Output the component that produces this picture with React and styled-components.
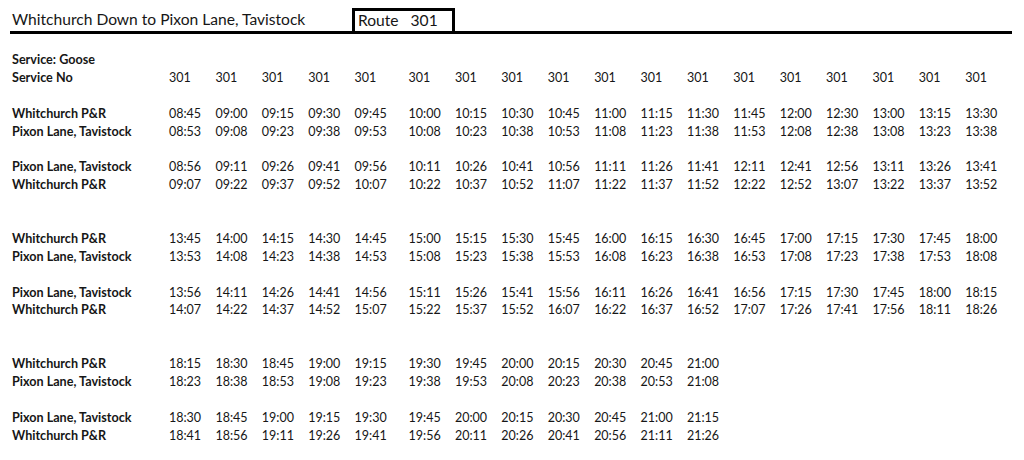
import React from 'react'
import styled, { createGlobalStyle } from 'styled-components'

const GlobalStyle = createGlobalStyle`
  html, body {
    margin: 0;
    padding: 0;
    background: #fff;
  }
  body {
    font-family: Lato, "Liberation Sans", sans-serif;
    color: #161616;
  }
`

const Page = styled.div`
  width: 1024px;
  height: 460px;
  overflow: hidden;
  background: #fff;
`

const Header = styled.div`
  display: flex;
  align-items: flex-end;
  margin: 0 12px 0 10px;
  padding-top: 8px;
  border-bottom: 3px solid #000;
`

const Title = styled.div`
  width: 342px;
  padding-left: 2px;
  box-sizing: border-box;
  font-size: 15.6px;
  line-height: 23px;
`

const RouteBox = styled.div`
  width: 103px;
  height: 23px;
  box-sizing: border-box;
  border: 3px solid #000;
  border-bottom: none;
  padding-left: 3px;
  font-size: 15.6px;
  line-height: 19px;
  white-space: pre;
`

const Table = styled.div`
  padding: 17px 0 0 12px;
`

const Row = styled.div`
  display: grid;
  grid-template-columns: 157px repeat(4, 46.4px) 54px repeat(13, 46.4px);
  height: 17.9px;
  align-items: center;
  font-size: 12.5px;
  line-height: 17.9px;
`

const Label = styled.div`
  font-weight: 700;
  font-size: 12.6px;
  white-space: nowrap;
`

const Cell = styled.div`
  white-space: nowrap;
`

const Spacer = styled.div`
  height: ${p => p.rows * 17.9}px;
`

const W = 'Whitchurch P&R'
const P = 'Pixon Lane, Tavistock'

const blocks = [
  [
    [W, '08:45 09:00 09:15 09:30 09:45 10:00 10:15 10:30 10:45 11:00 11:15 11:30 11:45 12:00 12:30 13:00 13:15 13:30'],
    [P, '08:53 09:08 09:23 09:38 09:53 10:08 10:23 10:38 10:53 11:08 11:23 11:38 11:53 12:08 12:38 13:08 13:23 13:38'],
    null,
    [P, '08:56 09:11 09:26 09:41 09:56 10:11 10:26 10:41 10:56 11:11 11:26 11:41 12:11 12:41 12:56 13:11 13:26 13:41'],
    [W, '09:07 09:22 09:37 09:52 10:07 10:22 10:37 10:52 11:07 11:22 11:37 11:52 12:22 12:52 13:07 13:22 13:37 13:52'],
  ],
  [
    [W, '13:45 14:00 14:15 14:30 14:45 15:00 15:15 15:30 15:45 16:00 16:15 16:30 16:45 17:00 17:15 17:30 17:45 18:00'],
    [P, '13:53 14:08 14:23 14:38 14:53 15:08 15:23 15:38 15:53 16:08 16:23 16:38 16:53 17:08 17:23 17:38 17:53 18:08'],
    null,
    [P, '13:56 14:11 14:26 14:41 14:56 15:11 15:26 15:41 15:56 16:11 16:26 16:41 16:56 17:15 17:30 17:45 18:00 18:15'],
    [W, '14:07 14:22 14:37 14:52 15:07 15:22 15:37 15:52 16:07 16:22 16:37 16:52 17:07 17:26 17:41 17:56 18:11 18:26'],
  ],
  [
    [W, '18:15 18:30 18:45 19:00 19:15 19:30 19:45 20:00 20:15 20:30 20:45 21:00'],
    [P, '18:23 18:38 18:53 19:08 19:23 19:38 19:53 20:08 20:23 20:38 20:53 21:08'],
    null,
    [P, '18:30 18:45 19:00 19:15 19:30 19:45 20:00 20:15 20:30 20:45 21:00 21:15'],
    [W, '18:41 18:56 19:11 19:26 19:41 19:56 20:11 20:26 20:41 20:56 21:11 21:26'],
  ],
]

function TimeRow({ label, times }) {
  return (
    <Row>
      <Label>{label}</Label>
      {times.map((t, i) => <Cell key={i}>{t}</Cell>)}
    </Row>
  )
}

export default function App() {
  const serviceNos = Array(18).fill('301')
  return (
    <Page>
      <GlobalStyle />
      <Header>
        <Title>Whitchurch Down to Pixon Lane, Tavistock</Title>
        <RouteBox>{'Route   301'}</RouteBox>
      </Header>
      <Table>
        <Row><Label>Service: Goose</Label></Row>
        <TimeRow label="Service No" times={serviceNos} />
        {blocks.map((block, b) => (
          <React.Fragment key={b}>
            <Spacer rows={b === 0 ? 1 : 2} />
            {block.map((r, i) => r
              ? <TimeRow key={i} label={r[0]} times={r[1].split(' ')} />
              : <Spacer key={i} rows={1} />)}
          </React.Fragment>
        ))}
      </Table>
    </Page>
  )
}
